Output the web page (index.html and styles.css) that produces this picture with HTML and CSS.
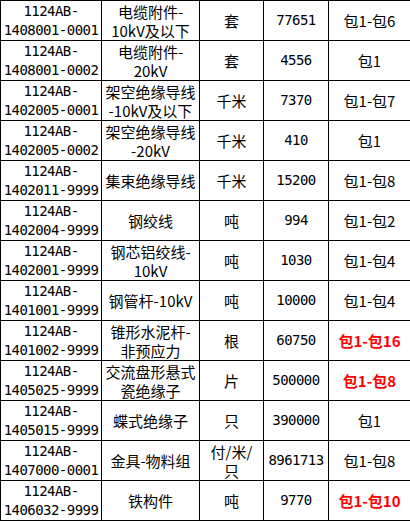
FILE: index.html
```html
<!DOCTYPE html>
<html lang="zh">
<head>
<meta charset="utf-8">
<title>物料表</title>
<link rel="stylesheet" href="styles.css">
</head>
<body>
<table class="grid">
  <colgroup>
    <col class="c-code">
    <col class="c-name">
    <col class="c-unit">
    <col class="c-qty">
    <col class="c-pkg">
  </colgroup>
  <tbody>
    <tr><td class="mono">1124AB-<br>1408001-0001</td><td>电缆附件-<br>10kV及以下</td><td>套</td><td class="mono">77651</td><td>包1-包6</td></tr>
    <tr><td class="mono">1124AB-<br>1408001-0002</td><td>电缆附件-<br>20kV</td><td>套</td><td class="mono">4556</td><td>包1</td></tr>
    <tr><td class="mono">1124AB-<br>1402005-0001</td><td>架空绝缘导线<br>-10kV及以下</td><td>千米</td><td class="mono">7370</td><td>包1-包7</td></tr>
    <tr><td class="mono">1124AB-<br>1402005-0002</td><td>架空绝缘导线<br>-20kV</td><td>千米</td><td class="mono">410</td><td>包1</td></tr>
    <tr><td class="mono">1124AB-<br>1402011-9999</td><td>集束绝缘导线</td><td>千米</td><td class="mono">15200</td><td>包1-包8</td></tr>
    <tr><td class="mono">1124AB-<br>1402004-9999</td><td>钢绞线</td><td>吨</td><td class="mono">994</td><td>包1-包2</td></tr>
    <tr><td class="mono">1124AB-<br>1402001-9999</td><td>钢芯铝绞线-<br>10kV</td><td>吨</td><td class="mono">1030</td><td>包1-包4</td></tr>
    <tr><td class="mono">1124AB-<br>1401001-9999</td><td>钢管杆-10kV</td><td>吨</td><td class="mono">10000</td><td>包1-包4</td></tr>
    <tr><td class="mono">1124AB-<br>1401002-9999</td><td>锥形水泥杆-<br>非预应力</td><td>根</td><td class="mono">60750</td><td class="hot">包1-包16</td></tr>
    <tr><td class="mono">1124AB-<br>1405025-9999</td><td>交流盘形悬式<br>瓷绝缘子</td><td>片</td><td class="mono">500000</td><td class="hot">包1-包8</td></tr>
    <tr><td class="mono">1124AB-<br>1405015-9999</td><td>蝶式绝缘子</td><td>只</td><td class="mono">390000</td><td>包1</td></tr>
    <tr><td class="mono">1124AB-<br>1407000-0001</td><td>金具-物料组</td><td>付/米/<br>只</td><td class="mono">8961713</td><td>包1-包8</td></tr>
    <tr><td class="mono">1124AB-<br>1406032-9999</td><td>铁构件</td><td>吨</td><td class="mono">9770</td><td class="hot">包1-包10</td></tr>
  </tbody>
</table>
</body>
</html>
```
FILE: styles.css
```css
html, body {
  margin: 0;
  padding: 0;
  background: #ffffff;
}

.grid {
  border-collapse: collapse;
  table-layout: fixed;
  width: 410px;
  font-family: "Noto Sans CJK SC", "Noto Sans", sans-serif;
  font-size: 15px;
  color: #000000;
}

.c-code { width: 101px; }
.c-name { width: 98px; }
.c-unit { width: 64px; }
.c-qty  { width: 65px; }
.c-pkg  { width: 82px; }

.grid td {
  border: 1px solid #000000;
  height: 39px;
  padding: 0;
  text-align: center;
  vertical-align: middle;
  line-height: 19px;
  white-space: nowrap;
  overflow: hidden;
}

.grid td.mono {
  font-family: "DejaVu Sans Mono", "Liberation Mono", monospace;
  font-size: 14px;
  letter-spacing: -0.55px;
}

.grid td.hot {
  color: #ff0000;
  font-weight: bold;
}
```
